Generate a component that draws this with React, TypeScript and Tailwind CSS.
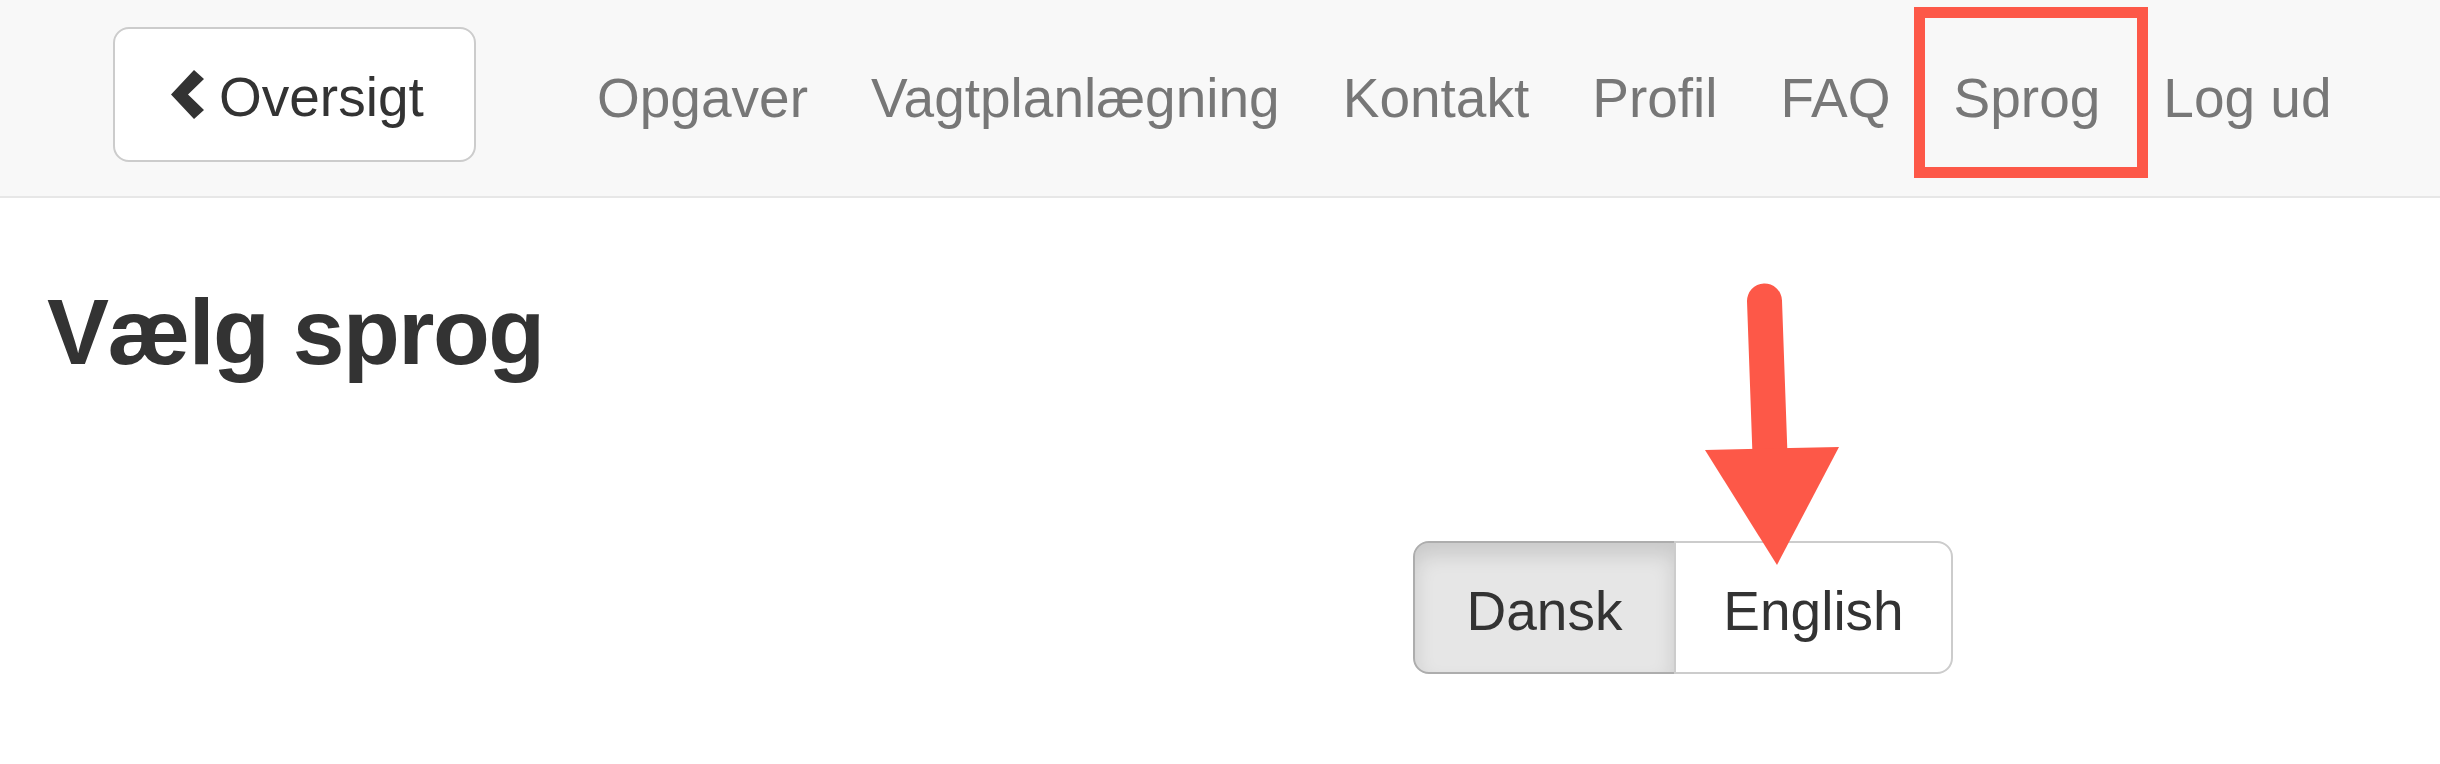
const links = ["Opgaver", "Vagtplanlægning", "Kontakt", "Profil", "FAQ", "Sprog", "Log ud"];

function ChevronLeft() {
  return (
    <svg width="33" height="49" viewBox="0 0 33 49" className="shrink-0">
      <path d="M23 0 L33 9 L17 24.5 L33 40 L23 49 L0 24.5 Z" fill="#333333" />
    </svg>
  );
}

function Arrow() {
  return (
    <svg
      width="170"
      height="310"
      viewBox="0 0 170 310"
      className="absolute left-[1690px] top-[270px] pointer-events-none"
    >
      <line x1="74.5" y1="31" x2="80" y2="185" stroke="#fd5848" strokeWidth="35" strokeLinecap="round" />
      <polygon points="15,180 149,177 87,295" fill="#fd5848" />
    </svg>
  );
}

export default function App() {
  return (
    <div className="relative min-h-[764px] w-[2440px] bg-white font-['Liberation_Sans',Arial,sans-serif] text-[#333]">
      <header className="flex h-[198px] items-start border-b-2 border-[#e7e7e7] bg-[#f8f8f8]">
        <button className="ml-[113px] mt-[27px] flex h-[135px] w-[363px] items-center gap-[15px] rounded-[16px] border-2 border-[#cccccc] bg-white pl-[56px] pt-[6px] text-[55px] text-[#333]">
          <span className="-mt-[6px] flex">
            <ChevronLeft />
          </span>
          <span>Oversigt</span>
        </button>
        <nav className="ml-[89.5px] flex h-[196px] items-stretch">
          {links.map((link) => {
            return (
              <a key={link} className="relative flex items-center px-[31.5px] text-[55px] text-[#777]">
                {link}
                {link === "Sprog" && (
                  <span className="absolute -left-[8px] -right-[16px] top-[7px] bottom-[18px] border-[11px] border-[#fd5848]" />
                )}
              </a>
            );
          })}
        </nav>
      </header>
      <h3 className="mt-[82px] pl-[47px] text-[93px] font-bold leading-[1.13] tracking-[-1.5px] text-[#333]">
        Vælg sprog
      </h3>
      <div className="ml-[1413px] mt-[156px] flex h-[133px] w-[540px] text-[55px]">
        <button className="flex w-[263px] items-center justify-center rounded-l-[16px] border-2 border-[#adadad] bg-[#e6e6e6] pt-[8px] text-[#333] shadow-[inset_0_12px_20px_rgba(0,0,0,0.125)]">
          Dansk
        </button>
        <button className="-ml-[2px] flex w-[279px] items-center justify-center rounded-r-[16px] border-2 border-[#cccccc] bg-white pt-[8px] text-[#333]">
          English
        </button>
      </div>
      <Arrow />
    </div>
  );
}
